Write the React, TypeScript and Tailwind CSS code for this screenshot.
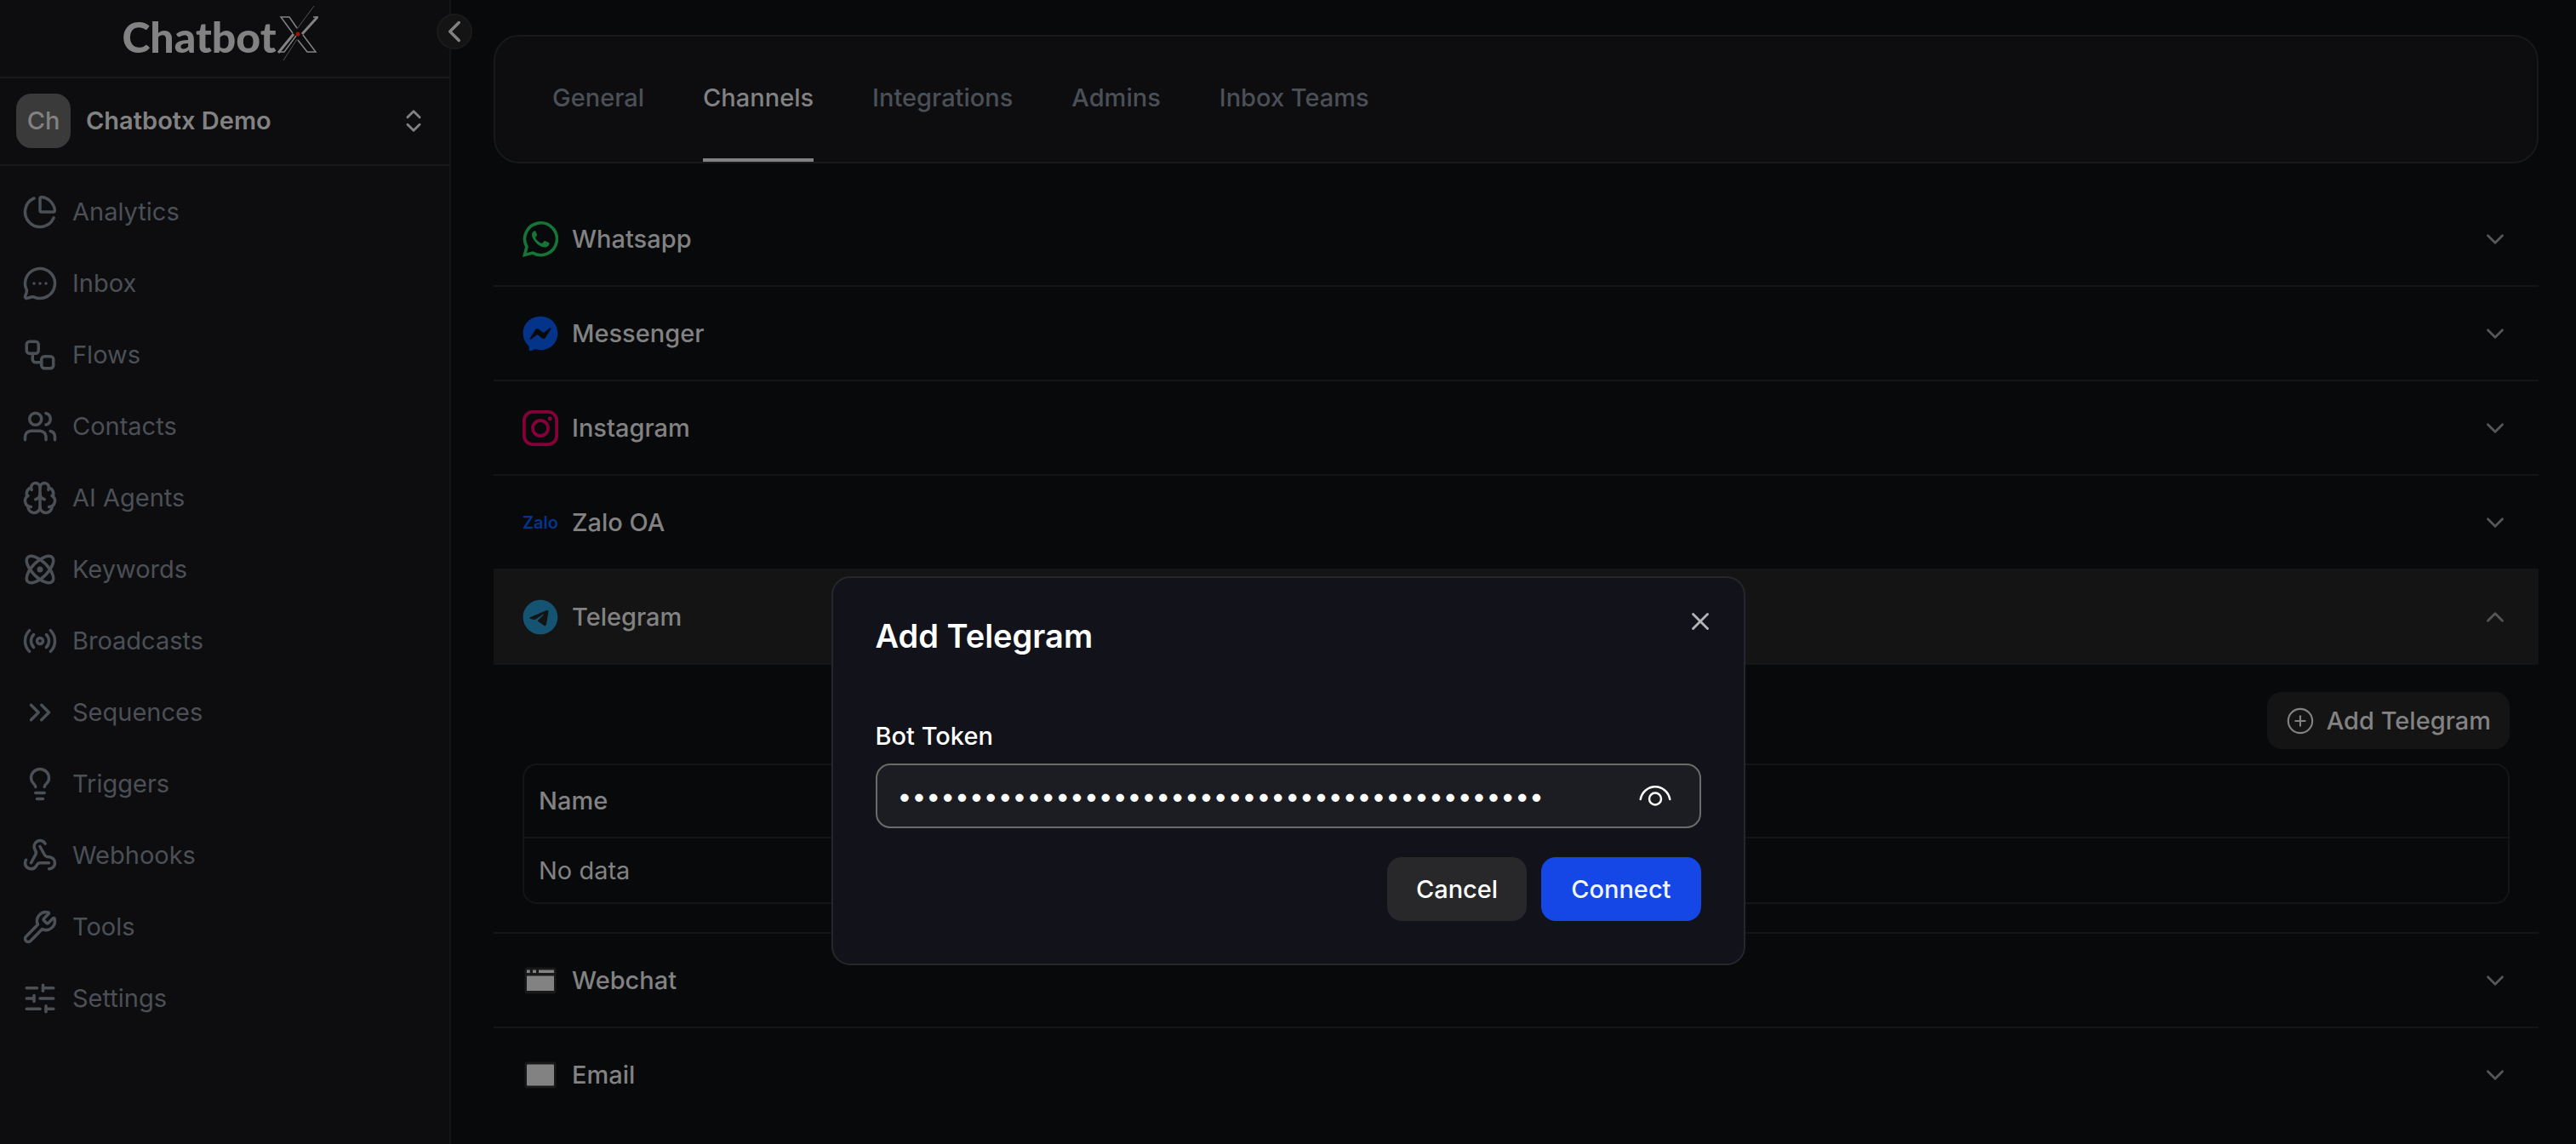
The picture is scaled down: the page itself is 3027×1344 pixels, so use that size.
import {
  Atom,
  Brain,
  ChartPie,
  ChevronDown,
  ChevronLeft,
  ChevronsRight,
  ChevronsUpDown,
  ChevronUp,
  CirclePlus,
  Lightbulb,
  MessageCircleMore,
  Radio,
  SlidersHorizontal,
  Users,
  Webhook,
  Workflow,
  Wrench,
  X,
} from "lucide-react";
import { FaFacebookMessenger, FaTelegram } from "react-icons/fa6";

const navItems = [
  { icon: ChartPie, label: "Analytics" },
  { icon: MessageCircleMore, label: "Inbox" },
  { icon: Workflow, label: "Flows" },
  { icon: Users, label: "Contacts" },
  { icon: Brain, label: "AI Agents" },
  { icon: Atom, label: "Keywords" },
  { icon: Radio, label: "Broadcasts" },
  { icon: ChevronsRight, label: "Sequences" },
  { icon: Lightbulb, label: "Triggers" },
  { icon: Webhook, label: "Webhooks" },
  { icon: Wrench, label: "Tools" },
  { icon: SlidersHorizontal, label: "Settings" },
];

const tabs = ["General", "Channels", "Integrations", "Admins", "Inbox Teams"];

function WhatsappIcon() {
  return (
    <svg viewBox="0 0 42 42" className="size-[42px]" fill="none" aria-hidden="true">
      <path d="M2.4 39.6l2.6-9.600A18.900 18.900 0 1 1 12 37.100z" stroke="#157536" strokeWidth="3.600" />
      <path
        d="M14.200 11.200c-.8 0-3.200 1.500-3.200 4.800 0 3.400 2.500 6.500 4.500 8.800 2.600 3 6.500 5.500 10.400 5.700 2.800.1 5.100-1.800 5.500-3.600.2-1.200 0-1.500-.6-1.800l-4.300-2c-.6-.3-1-.2-1.400.4l-1.600 2c-.4.4-.8.4-1.300.2-3-1.300-5.300-3.300-6.900-6-.3-.5-.2-.9.200-1.300l1.400-1.800c.3-.4.3-.8.100-1.200l-1.700-3.600c-.300-.6-.6-.6-1.100-.6z"
        fill="#157536"
      />
    </svg>
  );
}

function InstagramIcon() {
  return (
    <svg viewBox="0 0 42 42" className="size-[42px]" fill="none" stroke="#850038" strokeWidth="3.800" aria-hidden="true">
      <rect x="1.900" y="1.900" width="38.200" height="38.200" rx="10" />
      <circle cx="21" cy="21" r="9" />
      <circle cx="32.200" cy="9.800" r="2.500" fill="#850038" stroke="none" />
    </svg>
  );
}

function ZaloIcon() {
  return (
    <span aria-hidden="true" className="flex w-[42px] justify-center text-[20px] leading-none font-semibold text-[#04348c]">
      Zalo
    </span>
  );
}

function WebchatIcon() {
  return (
    <svg viewBox="0 0 42 42" className="size-[42px]" fill="#828282" aria-hidden="true">
      <rect x="2.500" y="5.500" width="37" height="31" rx="3" fill="#191919" />
      <path d="M5 8.500h3.700v3.500H5zM12 8.500h4v3.500h-4zM19 8.500h18v3.500H19zM5 15.500h32V33H5z" />
    </svg>
  );
}

function EmailIcon() {
  return (
    <svg viewBox="0 0 42 42" className="size-[42px]" aria-hidden="true">
      <rect x="2.500" y="5.500" width="37" height="31" rx="3" fill="#191919" />
      <rect x="5" y="8.500" width="32" height="25" rx="1" fill="#828282" />
    </svg>
  );
}

const channels = [
  { name: "Whatsapp", icon: <WhatsappIcon /> },
  { name: "Messenger", icon: <FaFacebookMessenger className="size-[42px] text-[#04338a]" /> },
  { name: "Instagram", icon: <InstagramIcon /> },
  { name: "Zalo OA", icon: <ZaloIcon /> },
  { name: "Telegram", icon: <FaTelegram className="size-[42px] text-[#145472]" />, open: true },
  { name: "Webchat", icon: <WebchatIcon /> },
  { name: "Email", icon: <EmailIcon /> },
];

function Logo() {
  return (
    <div className="flex h-[92px] items-center justify-center border-b-2 border-[#18191b] pb-1">
      <span className="font-[Lato] text-[50px] leading-none font-black text-[#828282]">Chatbot</span>
      <svg viewBox="0 0 60 86" className="h-[86px] w-[60px]" fill="none" stroke="#828282" aria-hidden="true">
        <path d="M19 39L5 20h10l9 13M31 41l15 20H36L25 47" strokeWidth="1.500" />
        <path d="M2 62l18-22M30 40L48 20" strokeWidth="3" />
        <path d="M43 20h6M2 61h7l14-19" strokeWidth="1.500" />
        <path d="M44 7L24 34M24 46L8 71" strokeWidth="0.600" />
        <circle cx="25" cy="40" r="2.500" fill="#a01208" stroke="none" />
      </svg>
    </div>
  );
}

function Sidebar() {
  return (
    <aside className="relative w-[530px] shrink-0 border-r-2 border-[#141517] bg-[#0d0d0f]">
      <Logo />
      <button
        type="button"
        aria-label="Collapse sidebar"
        className="absolute top-4 -right-[27px] flex size-[42px] items-center justify-center rounded-full border-2 border-[#1a1a1a] bg-[#141414] text-[#828282]"
      >
        <ChevronLeft className="size-[42px] shrink-0" />
      </button>
      <button
        type="button"
        className="flex h-[103px] w-full items-center gap-[18px] border-b-2 border-[#18191b] pr-[25px] pb-px pl-[19px] text-left"
      >
        <span className="flex size-16 items-center justify-center rounded-[18px] bg-[#3a3a3a] font-medium text-[#828282]">
          Ch
        </span>
        <span className="flex-1 font-semibold text-[#828282]">Chatbotx Demo</span>
        <ChevronsUpDown className="size-[34px] text-[#828282]" />
      </button>
      <nav className="flex flex-col pt-3">
        {navItems.map(({ icon: Icon, label }) => (
          <a key={label} href="#" className="flex h-[84px] items-center gap-[17px] pl-[26px] text-[#4b4f56]">
            <Icon className="size-[42px]" />
            {label}
          </a>
        ))}
      </nav>
    </aside>
  );
}

function TelegramPanel() {
  return (
    <div className="flex flex-col items-end gap-[17px] border-b-2 border-[#141516] px-[34px] pt-8 pb-[33px]">
      <button
        type="button"
        className="flex h-[67px] items-center gap-[14px] rounded-[17px] bg-[#141414] px-[22px] font-medium text-[#828282]"
      >
        <CirclePlus className="size-[34px]" strokeWidth={1.5} />
        Add Telegram
      </button>
      <div className="w-full rounded-[17px] border-2 border-[#141516]">
        <table className="w-full text-left text-[#828282]">
          <thead>
            <tr className="h-[85px] border-b-2 border-[#141516]">
              <th className="px-[17px] font-medium">Name</th>
            </tr>
          </thead>
          <tbody>
            <tr className="h-[76px]">
              <td className="px-[17px]">No data</td>
            </tr>
          </tbody>
        </table>
      </div>
    </div>
  );
}

function ChannelList() {
  return (
    <div className="mt-[34px]">
      {channels.map(({ name, icon, open }) => (
        <section key={name} className="group">
          <button
            type="button"
            aria-expanded={Boolean(open)}
            className="flex h-[111px] w-full items-center gap-4 border-b-2 border-[#141516] px-[34px] font-medium text-[#828282] group-last:border-transparent aria-expanded:bg-[#141414]"
          >
            {icon}
            <span className="flex-1 text-left">{name}</span>
            {open ? (
              <ChevronUp className="size-[34px] text-[#565656]" />
            ) : (
              <ChevronDown className="size-[34px] text-[#565656]" />
            )}
          </button>
          {open && <TelegramPanel />}
        </section>
      ))}
    </div>
  );
}

function AddTelegramDialog() {
  return (
    <div className="absolute inset-x-0 top-[677px] flex justify-center">
      <div
        role="dialog"
        aria-labelledby="dialog-title"
        className="relative w-full max-w-[1074px] rounded-[22px] border-2 border-[#26272c] bg-[#11121a] px-[50px] pt-12 pb-[50px] text-white"
      >
        <h2 id="dialog-title" className="text-[38px] leading-10 font-semibold">
          Add Telegram
        </h2>
        <button type="button" aria-label="Close" className="absolute top-[34px] right-[34px] text-[#b4b4b8]">
          <X className="size-[34px]" />
        </button>
        <form className="mt-[78px] flex flex-col">
          <label htmlFor="bot-token" className="leading-10 font-medium">
            Bot Token
          </label>
          <div className="mt-3 flex h-[76px] items-center rounded-[17px] border-2 border-[#6b6b6b] bg-[#1c1d22] pr-8 pl-6">
            <input
              id="bot-token"
              type="password"
              defaultValue="7412093658:AAHq3nLx0vTbW9kZr5sYdE2mUcJfGpQoi4"
              className="min-w-0 flex-1 bg-transparent text-[30px] outline-none"
            />
            <button type="button" aria-label="Show token">
              <svg viewBox="0 0 40 40" className="size-10" fill="none" stroke="white" strokeWidth="2.500" aria-hidden="true">
                <path d="M2.700 24C4.500 15 12 9.300 20 9.300S35.500 15 37.300 24" strokeLinecap="round" />
                <circle cx="20" cy="23.500" r="7" />
              </svg>
            </button>
          </div>
          <div className="mt-[34px] flex justify-end gap-[17px] font-medium">
            <button type="button" className="h-[75px] rounded-[17px] bg-[#28282a] px-[34px]">
              Cancel
            </button>
            <button type="submit" className="h-[75px] rounded-[17px] bg-[#1447e6] px-[35px] text-[#eff6ff]">
              Connect
            </button>
          </div>
        </form>
      </div>
    </div>
  );
}

export default function App() {
  return (
    <div className="relative flex min-h-screen bg-[#08090b] font-[Inter,sans-serif] text-[29px] leading-10">
      <Sidebar />
      <main className="min-w-0 flex-1 pt-[41px] pr-11 pl-[50px]">
        <div role="tablist" className="flex h-[151px] gap-[69px] rounded-[30px] border-2 border-[#18191b] bg-[#0d0d0f] px-[67px]">
          {tabs.map((tab) => (
            <button
              key={tab}
              type="button"
              role="tab"
              aria-selected={tab === "Channels"}
              className="border-b-4 border-transparent font-medium text-[#4b4f56] aria-selected:border-[#828282] aria-selected:text-[#828282]"
            >
              {tab}
            </button>
          ))}
        </div>
        <ChannelList />
      </main>
      <AddTelegramDialog />
    </div>
  );
}
